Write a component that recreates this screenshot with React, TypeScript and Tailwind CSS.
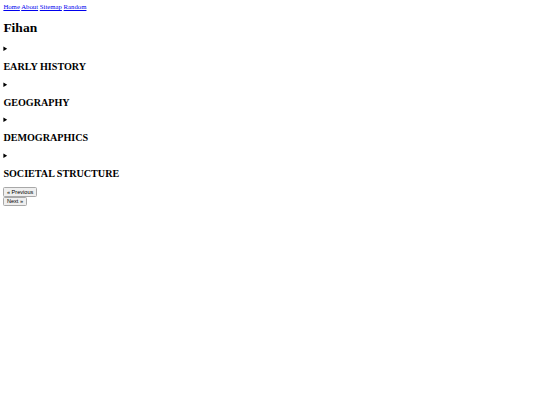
export default function App() {
  const sections = ["EARLY HISTORY", "GEOGRAPHY", "DEMOGRAPHICS", "SOCIETAL STRUCTURE"];
  return (
    <div className="min-h-screen bg-white p-[3.375px] text-black leading-[normal] [font-family:'Liberation_Serif',serif] text-[6.75px]">
      <nav>
        <a href="#" className="text-[#0000ee] underline">Home</a>{" "}
        <a href="#" className="text-[#0000ee] underline">About</a>{" "}
        <a href="#" className="text-[#0000ee] underline">Sitemap</a>{" "}
        <a href="#" className="text-[#0000ee] underline">Random</a>
      </nav>
      <h1 className="my-[9.5px] text-[13.5px] font-bold">Fihan</h1>
      {sections.map((s) => (
        <details key={s}>
          <summary>
            <h2 className="my-[8.75px] text-[10.125px] font-bold">{s}</h2>
          </summary>
        </details>
      ))}
      <div>
        <button className="rounded-[1.5px] border border-[#a8a8a8] bg-[#efefef] px-[2.5px] py-[0.6px] text-[5.625px] leading-[normal] text-black [font-family:'Liberation_Sans',sans-serif]">
          « Previous
        </button>
      </div>
      <div>
        <button className="rounded-[1.5px] border border-[#a8a8a8] bg-[#efefef] px-[2.5px] py-[0.6px] text-[5.625px] leading-[normal] text-black [font-family:'Liberation_Sans',sans-serif]">
          Next »
        </button>
      </div>
    </div>
  );
}
